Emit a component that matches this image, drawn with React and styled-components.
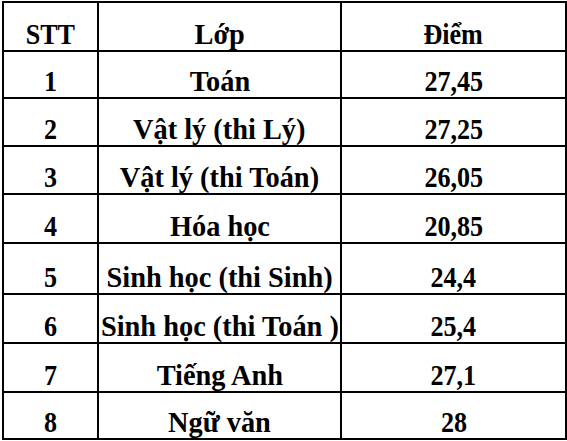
import React from "react";
import styled, { createGlobalStyle } from "styled-components";

const GlobalStyle = createGlobalStyle`
  html, body {
    margin: 0;
    padding: 0;
    background: #fff;
  }
  body {
    font-family: "Liberation Serif", "Times New Roman", serif;
  }
`;

const rows = [
  { stt: "1", lop: "Toán", diem: "27,45", h: 47 },
  { stt: "2", lop: "Vật lý (thi Lý)", diem: "27,25", h: 48 },
  { stt: "3", lop: "Vật lý (thi Toán)", diem: "26,05", h: 48 },
  { stt: "4", lop: "Hóa học", diem: "20,85", h: 49 },
  { stt: "5", lop: "Sinh học (thi Sinh)", diem: "24,4", h: 51 },
  { stt: "6", lop: "Sinh học (thi Toán )", diem: "25,4", h: 49 },
  { stt: "7", lop: "Tiếng Anh", diem: "27,1", h: 49 },
  { stt: "8", lop: "Ngữ văn", diem: "28", h: 47 },
];

const Page = styled.div`
  padding: 1px 0 0 2px;
`;

const Table = styled.div`
  display: grid;
  grid-template-columns: 95px 243px 225px;
  width: 563px;
  border-left: 2px solid #000;
  border-top: 2px solid #000;
`;

const Cell = styled.div`
  height: ${(p) => p.$h}px;
  box-sizing: border-box;
  border-right: 2px solid #000;
  border-bottom: 2px solid #000;
  display: flex;
  align-items: flex-end;
  justify-content: center;
  padding-bottom: 1px;
  overflow: visible;
  white-space: nowrap;
`;

const Text = styled.span`
  display: inline-block;
  font-weight: bold;
  font-size: 30px;
  line-height: 30px;
  color: #000;
  transform: scaleX(${(p) => (p.$wide ? 0.945 : 0.87)});
  transform-origin: center bottom;
`;

export default function App() {
  return (
    <>
      <GlobalStyle />
      <Page>
        <Table>
          <Cell $h={49}><Text>STT</Text></Cell>
          <Cell $h={49}><Text $wide>Lớp</Text></Cell>
          <Cell $h={49}><Text>Điểm</Text></Cell>
          {rows.map((r) => (
            <React.Fragment key={r.stt}>
              <Cell $h={r.h}><Text>{r.stt}</Text></Cell>
              <Cell $h={r.h}><Text $wide>{r.lop}</Text></Cell>
              <Cell $h={r.h}><Text>{r.diem}</Text></Cell>
            </React.Fragment>
          ))}
        </Table>
      </Page>
    </>
  );
}
